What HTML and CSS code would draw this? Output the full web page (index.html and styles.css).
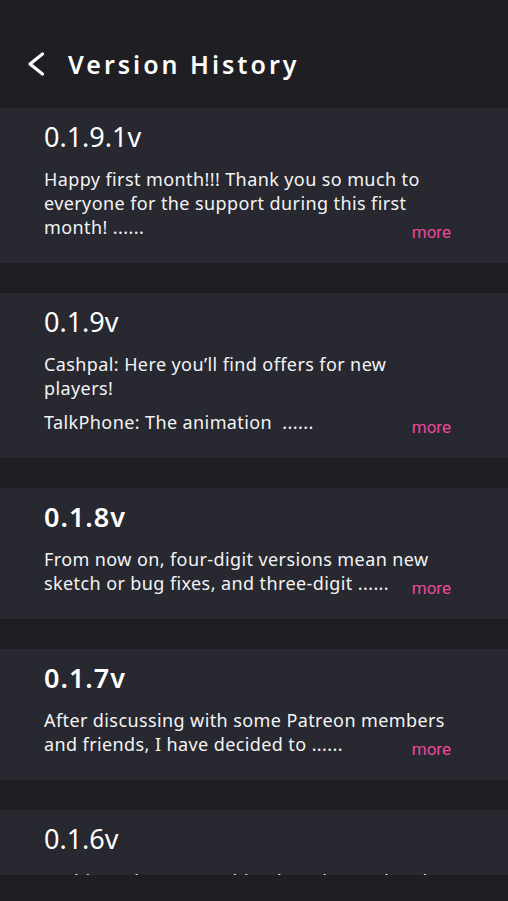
FILE: index.html
```html
<!DOCTYPE html>
<html lang="en">
<head>
<meta charset="utf-8">
<title>Version History</title>
<link rel="stylesheet" href="styles.css">
</head>
<body>
<div class="app">
  <header class="header">
    <svg class="back" width="20" height="26" viewBox="0 0 20 26" aria-hidden="true">
      <path d="M16.5 3 L4 13 L16.5 23" fill="none" stroke="#ffffff" stroke-width="3.2" stroke-linecap="round" stroke-linejoin="round"/>
    </svg>
    <h1 class="title">Version History</h1>
  </header>
  <main class="list">
    <section class="card">
      <h2 class="version">0.1.9.1v</h2>
      <div class="body">
        <p>Happy first month!!! Thank you so much to everyone for the support during this first month! ......</p>
      </div>
      <span class="more">more</span>
    </section>
    <section class="card">
      <h2 class="version">0.1.9v</h2>
      <div class="body">
        <p>Cashpal: Here you’ll find offers for new players!</p>
        <p>TalkPhone: The animation&nbsp; ......</p>
      </div>
      <span class="more">more</span>
    </section>
    <section class="card">
      <h2 class="version bold">0.1.8v</h2>
      <div class="body">
        <p>From now on, four-digit versions mean new sketch or bug fixes, and three-digit ......</p>
      </div>
      <span class="more">more</span>
    </section>
    <section class="card">
      <h2 class="version bold">0.1.7v</h2>
      <div class="body">
        <p>After discussing with some Patreon members and friends, I have decided to ......</p>
      </div>
      <span class="more">more</span>
    </section>
    <section class="card">
      <h2 class="version">0.1.6v</h2>
      <div class="body">
        <p>In this update, something has changed and I added the new ......</p>
      </div>
      <span class="more">more</span>
    </section>
  </main>
  <footer class="footer"></footer>
</div>
</body>
</html>
```

FILE: styles.css
```css
* { box-sizing: border-box; }
html, body {
  margin: 0;
  padding: 0;
  background: #1e1e23;
}
body {
  font-family: "Noto Sans", "Open Sans", sans-serif;
  color: #f4f4f6;
}
.app {
  width: 508px;
  height: 901px;
  display: flex;
  flex-direction: column;
  overflow: hidden;
}
.header {
  height: 108px;
  flex: none;
  display: flex;
  align-items: center;
  padding-left: 26px;
  padding-top: 20px;
  gap: 22px;
}
.back { display: block; margin-top: 0; }
.title {
  margin: 0;
  font-size: 25px;
  font-weight: 600;
  letter-spacing: 3px;
  color: #ffffff;
  line-height: 30px;
}
.list {
  height: 767px;
  flex: none;
  overflow: hidden;
  display: flex;
  flex-direction: column;
  gap: 30px;
}
.card {
  position: relative;
  flex: none;
  background: #272830;
  padding: 12px 50px 24px 44px;
}
.version {
  margin: 0;
  font-size: 27px;
  font-weight: 400;
  line-height: 34px;
  color: #ffffff;
}
.version.bold {
  font-weight: 600;
  letter-spacing: 1px;
}
.body {
  margin-top: 13px;
  display: flex;
  flex-direction: column;
  gap: 10px;
}
.body p {
  margin: 0;
  font-size: 18px;
  line-height: 24px;
  letter-spacing: 0.4px;
  color: #f4f4f6;
}
.more {
  position: absolute;
  right: 57px;
  bottom: 21px;
  font-family: Roboto, "Liberation Sans", sans-serif;
  font-size: 17px;
  line-height: 20px;
  color: #ec4899;
}
.footer {
  flex: 1;
  background: #1e1e23;
}
```
